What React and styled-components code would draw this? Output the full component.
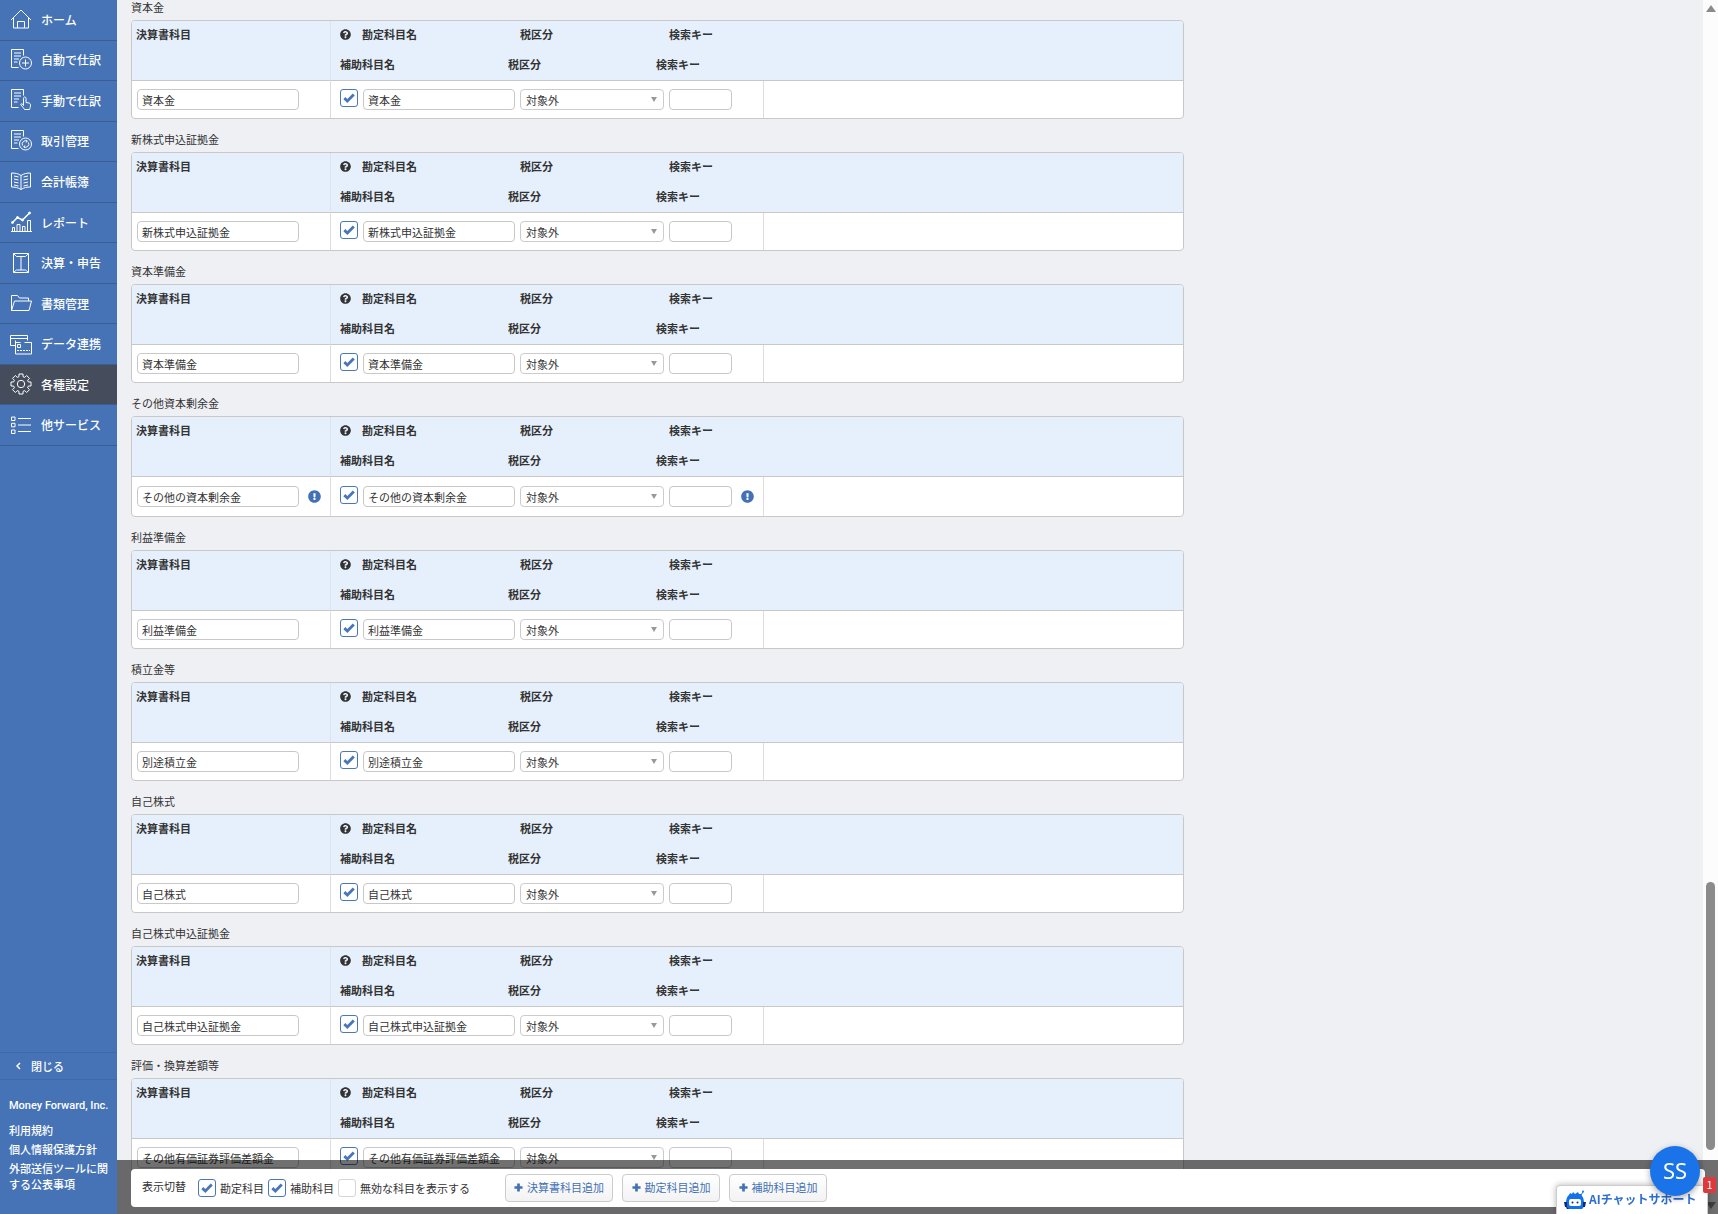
import React from "react";
import styled, { createGlobalStyle } from "styled-components";
import { FaQuestionCircle, FaExclamationCircle } from "react-icons/fa";

const gearPath = () => {
  const teeth = 8;
  const step = (Math.PI * 2) / teeth;
  const point = (r, a) =>
    `${(11 + r * Math.cos(a)).toFixed(2)} ${(11 + r * Math.sin(a)).toFixed(2)}`;
  const points = [];
  for (let i = 0; i < teeth; i++) {
    const a = i * step;
    points.push(point(7.6, a - 0.27), point(10.2, a - 0.2), point(10.2, a + 0.2), point(7.6, a + 0.27));
  }
  return `M${points.join("L")}Z`;
};

const sheet = (
  <>
    <path d="M8.5 18.5H1.5V.5h12v6" />
    <path d="M4 4h7M4 7h7M4 10h5M4 13h3.5" />
  </>
);

const icons = {
  home: <path d="M1 12 11 2l10 10M3.5 10v10h15V10M7.5 20v-6.5h7V20" />,
  auto: (
    <>
      {sheet}
      <circle cx="15.5" cy="14" r="6" />
      <path d="M15.5 10.5v7M12 14h7" />
    </>
  ),
  manual: (
    <>
      {sheet}
      <path d="M13.5 16.5V9.5c0-2 2.5-2 2.5 0v4l3 .5c1 .3 1.5 1 1.5 2 0 2-.5 3-1 4.5h-5c-1-2-2.5-3-3.5-4.5-.5-1.500 1-2 2.500.5" />
    </>
  ),
  trade: (
    <>
      {sheet}
      <circle cx="15.5" cy="14" r="6" />
      <path d="M12.5 15.5a3.3 3.3 0 0 1 4.8-4.2M18.5 12.5a3.3 3.3 0 0 1-4.8 4.2M15.8 10l1.5 1.3-1.5 1.2M15.2 18l-1.5-1.3 1.5-1.2" />
    </>
  ),
  book: (
    <>
      <path d="M11 5.5C8 3.5 5 3 1.5 3v14c3.5 0 6.5.5 9.5 2.5 3-2 6-2.5 9.5-2.5V3C17 3 14 3.5 11 5.5v14" />
      <path d="m4 6 4.5 1M4 9l4.5 1M4 12l4.5 1M4 15l4.5 1M18 6l-4.5 1M18 9l-4.5 1M18 12l-4.5 1M18 15l-4.5 1" />
    </>
  ),
  report: (
    <>
      <path d="M1 20.5h21M2.5 20v-3.5h2V20M7 20v-6.5h3V20M12.5 20v-4.5h2.5V20M17.5 20V9.5h3V20" />
      <path strokeWidth="1.5" d="m2.5 11.5 5-5 5 2.5 7-7" />
      <g fill="#fff">
        <circle cx="2.5" cy="11.5" r="1" />
        <circle cx="7.5" cy="6.5" r="1" />
        <circle cx="12.5" cy="9" r="1" />
        <circle cx="19.5" cy="2" r="1" />
      </g>
    </>
  ),
  closing: (
    <path d="M3.5 1.5h15v19h-15zM3.5 1.5 6.5 4.5h9l3-3M3.5 20.5l3-2.5h9l3 2.5M11 4.5V18" />
  ),
  folder: <path d="M1.5 18.5v-15h6l2 2.5h9v3M1.5 18.5 4.5 9h17l-2.5 9.5z" />,
  data: (
    <>
      <path d="M5 12.5H.5v-10h17v5M.5 5.5h17" />
      <path d="M5.5 7.5V21h16V9.5h-7M5.5 9.5h5M7.5 11.5h3v3h-3z" />
      <path strokeDasharray="2 1" d="M7 17.5h13" />
    </>
  ),
  settings: (
    <>
      <path d={gearPath()} />
      <circle cx="11" cy="11" r="3.7" />
    </>
  ),
  services: (
    <path d="M1.5 3H5v3.5H1.5zM1.5 9.3H5v3.5H1.5zM1.5 16H5v3.5H1.5zM8 4.5h13M8 11h13M8 17.5h13" />
  ),
};

const menu = [
  { icon: "home", label: "ホーム" },
  { icon: "auto", label: "自動で仕訳" },
  { icon: "manual", label: "手動で仕訳" },
  { icon: "trade", label: "取引管理" },
  { icon: "book", label: "会計帳簿" },
  { icon: "report", label: "レポート" },
  { icon: "closing", label: "決算・申告" },
  { icon: "folder", label: "書類管理" },
  { icon: "data", label: "データ連携" },
  { icon: "settings", label: "各種設定", active: true },
  { icon: "services", label: "他サービス" },
];

const groups = [
  { title: "資本金", rows: [{ name: "資本金" }] },
  { title: "新株式申込証拠金", rows: [{ name: "新株式申込証拠金" }] },
  { title: "資本準備金", rows: [{ name: "資本準備金" }] },
  { title: "その他資本剰余金", rows: [{ name: "その他の資本剰余金", notice: true }] },
  { title: "利益準備金", rows: [{ name: "利益準備金" }] },
  { title: "積立金等", rows: [{ name: "別途積立金" }] },
  { title: "自己株式", rows: [{ name: "自己株式" }] },
  { title: "自己株式申込証拠金", rows: [{ name: "自己株式申込証拠金" }] },
  { title: "評価・換算差額等", rows: [{ name: "その他有価証券評価差額金" }] },
];

const Check = ({ id, label, defaultChecked }) => (
  <CheckWrapper>
    <CheckInput id={id} type="checkbox" aria-label={label} defaultChecked={defaultChecked} />
    <svg viewBox="0 0 11 11" aria-hidden="true">
      <path d="M1.2 5.6 4 8.3 9.9 2.3" />
    </svg>
  </CheckWrapper>
);

const Plus = () => (
  <PlusIcon viewBox="0 0 10 10" aria-hidden="true">
    <path d="M5 .5v9M.5 5h9" />
  </PlusIcon>
);

const AccountGroup = ({ title, rows }) => (
  <Group>
    <GroupTitle>{title}</GroupTitle>
    <Table>
      <colgroup>
        <Col $width="199px" />
        <Col $width="433px" />
        <Col />
      </colgroup>
      <thead>
        <tr>
          <Th $line>決算書科目</Th>
          <Th colSpan={2}>
            <HeadLine $columns="22px 158px 149px auto">
              <FaQuestionCircle />
              <span>勘定科目名</span>
              <span>税区分</span>
              <span>検索キー</span>
            </HeadLine>
            <HeadLine $columns="168px 148px auto">
              <span>補助科目名</span>
              <span>税区分</span>
              <span>検索キー</span>
            </HeadLine>
          </Th>
        </tr>
      </thead>
      <tbody>
        {rows.map(({ name, notice }) => (
          <tr key={name}>
            <Td $line $tall={notice}>
              <Fields>
                <TextInput $width="162px" aria-label="決算書科目" defaultValue={name} />
                {notice && <Notice />}
              </Fields>
            </Td>
            <Td $line $tall={notice}>
              <Fields $indent>
                <Check label={`${name}を使用する`} defaultChecked />
                <TextInput $width="152px" aria-label="勘定科目名" defaultValue={name} />
                <SelectWrapper>
                  <Select aria-label="税区分" defaultValue="対象外">
                    <option>対象外</option>
                  </Select>
                </SelectWrapper>
                <TextInput $width="63px" aria-label="検索キー" />
                {notice && <Notice />}
              </Fields>
            </Td>
            <Td $tall={notice} />
          </tr>
        ))}
      </tbody>
    </Table>
  </Group>
);

const App = () => (
  <>
    <GlobalStyle />
    <Shell>
      <Sidebar>
        <Menu>
          {menu.map(({ icon, label, active }) => (
            <MenuItem key={label} $active={active}>
              <MenuLink href="#">
                <MenuIcon viewBox="0 0 22 22" aria-hidden="true">
                  {icons[icon]}
                </MenuIcon>
                {label}
              </MenuLink>
            </MenuItem>
          ))}
        </Menu>
        <CloseButton type="button">
          <Chevron viewBox="0 0 5 8" aria-hidden="true">
            <path d="M4 1 1 4l3 3" />
          </Chevron>
          閉じる
        </CloseButton>
        <SideFooter>
          <Company href="#">Money Forward, Inc.</Company>
          <FooterLink href="#">利用規約</FooterLink>
          <FooterLink href="#">個人情報保護方針</FooterLink>
          <FooterLink href="#">外部送信ツールに関する公表事項</FooterLink>
        </SideFooter>
      </Sidebar>
      <Main>
        <GroupList>
          {groups.map((group) => (
            <AccountGroup key={group.title} {...group} />
          ))}
        </GroupList>
      </Main>
      <ScrollTrack aria-hidden="true">
        <Arrow />
        <Space $grow={869} />
        <Thumb />
        <Space $grow={52} />
        <Arrow $down />
      </ScrollTrack>
    </Shell>
    <ActionBar>
      <ActionPanel>
        <Caption>表示切替</Caption>
        <Check id="show-account" defaultChecked />
        <CheckLabel htmlFor="show-account">勘定科目</CheckLabel>
        <Check id="show-sub" defaultChecked />
        <CheckLabel htmlFor="show-sub">補助科目</CheckLabel>
        <Check id="show-disabled" />
        <CheckLabel htmlFor="show-disabled">無効な科目を表示する</CheckLabel>
        <Buttons>
          <AddButton type="button" $width="108px">
            <Plus />
            決算書科目追加
          </AddButton>
          <AddButton type="button" $width="98px">
            <Plus />
            勘定科目追加
          </AddButton>
          <AddButton type="button" $width="98px">
            <Plus />
            補助科目追加
          </AddButton>
        </Buttons>
      </ActionPanel>
    </ActionBar>
    <ChatButton type="button">
      <Robot viewBox="0 0 22 20" aria-hidden="true">
        <path
          fill="#1372e8"
          d="M3 19q-1-1-1-5 0-7 3-9l1-2 2 1 1-2 2 2 3-2 1 2 2 0 1 2q2 2 2 8 0 4-2 5z"
        />
        <path stroke="#1372e8" strokeWidth="1" d="m17 5 2-3" />
        <circle cx="19" cy="1.5" r="1" fill="#1372e8" />
        <path fill="#0b2a7a" d="M0 12h3v5H1zM19 12h3l-1 5h-2zM2 16l3 3H3z" />
        <rect x="5" y="9" width="12" height="7" rx="2" fill="#fff" />
        <circle cx="8.5" cy="12.5" r="1" fill="#0b2a7a" />
        <circle cx="13.5" cy="12.5" r="1" fill="#0b2a7a" />
      </Robot>
      AIチャットサポート
    </ChatButton>
    <Avatar type="button">SS</Avatar>
    <Badge>1</Badge>
  </>
);

export default App;

const GlobalStyle = createGlobalStyle`
  * {
    box-sizing: border-box;
  }
  body {
    margin: 0;
    background: #eff0f4;
    color: #333;
    font-family: "Noto Sans CJK JP", sans-serif;
    font-size: 11px;
  }
  button,
  input,
  select {
    margin: 0;
    color: inherit;
    font: inherit;
  }
  a {
    color: inherit;
    text-decoration: none;
  }
`;

const Shell = styled.div`
  display: grid;
  grid-template-columns: 117px minmax(0, 1fr) 15px;
  height: 100vh;
  overflow: hidden;
`;

const Sidebar = styled.nav`
  display: flex;
  flex-direction: column;
  background: #4673b5;
  color: #fff;
`;

const Menu = styled.ul`
  display: flex;
  flex-direction: column;
  height: 446px;
  margin: 0 0 auto;
  padding: 0;
  list-style: none;
`;

const MenuItem = styled.li`
  flex: 1;
  border-bottom: 1px solid #3a5e94;
  background: ${({ $active }) => ($active ? "#454c5b" : "transparent")};
`;

const MenuLink = styled.a`
  display: flex;
  align-items: center;
  gap: 9px;
  height: 100%;
  padding: 0 0 1px 10px;
  font-size: 12px;
  font-weight: 500;
  white-space: nowrap;
`;

const MenuIcon = styled.svg`
  width: 22px;
  height: 22px;
  fill: none;
  stroke: #fff;
  stroke-width: 1;
  overflow: visible;
`;

const CloseButton = styled.button`
  display: flex;
  align-items: center;
  gap: 10px;
  height: 28px;
  padding: 0 0 0 16px;
  border: solid #3f68a5;
  border-width: 1px 0;
  background: none;
  font-weight: 500;
`;

const Chevron = styled.svg`
  width: 5px;
  height: 8px;
  fill: none;
  stroke: #fff;
  stroke-width: 1.5;
`;

const SideFooter = styled.div`
  display: flex;
  flex-direction: column;
  gap: 3px;
  padding: 18px 9px 22px;
  line-height: 16px;
  font-weight: 500;
`;

const Company = styled.a`
  margin-bottom: 5px;
  font-family: Roboto, sans-serif;
  white-space: nowrap;
`;

const FooterLink = styled.a`
  word-break: break-all;
`;

const Main = styled.main`
  overflow: hidden;
  padding: 0 14px;
`;

const GroupList = styled.div`
  display: flex;
  flex-direction: column;
  gap: 11px;
  max-width: 1053px;
  margin-top: -2px;
`;

const Group = styled.section`
  display: flex;
  flex-direction: column;
  gap: 4px;
`;

const GroupTitle = styled.h2`
  margin: 0;
  font-size: 11px;
  font-weight: normal;
  line-height: 18px;
`;

const Table = styled.table`
  width: 100%;
  table-layout: fixed;
  border: 1px solid #c8c8c8;
  border-radius: 4px;
  border-spacing: 0;
  background: #fff;
  overflow: hidden;
`;

const Col = styled.col`
  width: ${({ $width }) => $width || "auto"};
`;

const Th = styled.th`
  height: 60px;
  padding: 0 0 0 ${({ $line }) => ($line ? "4px" : "9px")};
  border-bottom: 1px solid #c8c8c8;
  border-right: ${({ $line }) => ($line ? "1px solid #dfe3e8" : "0")};
  background: #e6f0fd;
  line-height: 27px;
  text-align: left;
  vertical-align: top;
`;

const HeadLine = styled.div`
  display: grid;
  grid-template-columns: ${({ $columns }) => $columns};
  align-items: center;
  & + & {
    margin-top: 3px;
  }
  svg {
    width: 11px;
    height: 11px;
  }
`;

const Td = styled.td`
  height: ${({ $tall }) => ($tall ? "39px" : "37px")};
  padding: 0 0 0 5px;
  border-right: ${({ $line }) => ($line ? "1px solid #ddd" : "0")};
`;

const Fields = styled.div`
  display: flex;
  gap: 5px;
  padding-left: ${({ $indent }) => ($indent ? "4px" : "0")};
`;

const TextInput = styled.input`
  width: ${({ $width }) => $width};
  height: 21px;
  padding: 0 4px;
  border: 1px solid #c8c8c8;
  border-radius: 4px;
  background: #fff;
`;

const Notice = styled(FaExclamationCircle)`
  width: 13px;
  height: 13px;
  margin: 4px 0 0 4px;
  color: #4371b5;
`;

const SelectWrapper = styled.div`
  position: relative;
  width: 144px;
  height: 21px;
  &::after {
    content: "";
    position: absolute;
    top: 8px;
    right: 7px;
    border: solid transparent;
    border-width: 5px 3px 0;
    border-top-color: #999;
    pointer-events: none;
  }
`;

const Select = styled.select`
  width: 100%;
  height: 100%;
  padding: 0 16px 0 5px;
  border: 1px solid #ccc;
  border-radius: 4px;
  background: #fff;
  line-height: 18px;
  appearance: none;
`;

const CheckWrapper = styled.span`
  display: grid;
  width: 18px;
  height: 18px;
  > * {
    grid-area: 1 / 1;
  }
  svg {
    place-self: center;
    width: 12px;
    height: 12px;
    fill: none;
    stroke: #4a77b8;
    stroke-width: 2.6;
    pointer-events: none;
  }
  input:not(:checked) + svg {
    visibility: hidden;
  }
`;

const CheckInput = styled.input`
  width: 18px;
  height: 18px;
  border: 1px solid #d5d5d5;
  border-radius: 3px;
  background: #fff;
  appearance: none;
  &:checked {
    border-color: #4a77b8;
  }
`;

const ScrollTrack = styled.div`
  display: flex;
  flex-direction: column;
  align-items: center;
  padding: 5px 0;
  background: #fcfcfc;
`;

const Arrow = styled.span`
  border: solid transparent;
  border-width: ${({ $down }) => ($down ? "7px 5px 0" : "0 5px 7px")};
  border-top-color: ${({ $down }) => ($down ? "#8b8b8b" : "transparent")};
  border-bottom-color: ${({ $down }) => ($down ? "transparent" : "#8b8b8b")};
`;

const Space = styled.span`
  flex: ${({ $grow }) => $grow};
`;

const Thumb = styled.span`
  flex: 267;
  width: 9px;
  border-radius: 5px;
  background: #8b8b8b;
`;

const ActionBar = styled.div`
  position: fixed;
  right: 0;
  bottom: 0;
  left: 117px;
  padding: 9px 13px 7px 14px;
  background: rgba(0, 0, 0, 0.56);
`;

const ActionPanel = styled.div`
  display: flex;
  align-items: center;
  gap: 4px;
  height: 38px;
  padding-left: 11px;
  border-radius: 4px;
  background: #fff;
`;

const Caption = styled.span`
  margin-right: 8px;
  padding-bottom: 4px;
`;

const CheckLabel = styled.label`
  padding-bottom: 1px;
`;

const Buttons = styled.div`
  display: flex;
  gap: 9px;
  margin-left: 31px;
`;

const AddButton = styled.button`
  display: flex;
  align-items: center;
  justify-content: center;
  gap: 4px;
  width: ${({ $width }) => $width};
  height: 28px;
  padding: 0 0 2px;
  border: 1px solid #ccc;
  border-radius: 4px;
  background: linear-gradient(#fff, #f2f2f2);
  color: #4371b5;
  white-space: nowrap;
`;

const PlusIcon = styled.svg`
  flex: none;
  width: 9px;
  height: 9px;
  stroke: #4371b5;
  stroke-width: 3;
`;

const ChatButton = styled.button`
  position: fixed;
  right: 10px;
  bottom: 0;
  display: flex;
  align-items: center;
  gap: 3px;
  width: 152px;
  height: 29px;
  padding: 0 0 4px 7px;
  border: 1px solid #ccc;
  border-bottom: 0;
  border-radius: 4px 4px 0 0;
  background: #fff;
  box-shadow: 0 0 6px rgba(0, 0, 0, 0.3);
  color: #2d6fd2;
  font-size: 12px;
  font-weight: bold;
  white-space: nowrap;
`;

const Robot = styled.svg`
  flex: none;
  width: 22px;
  height: 20px;
  margin-top: 4px;
`;

const Avatar = styled.button`
  position: fixed;
  right: 18px;
  bottom: 18px;
  width: 50px;
  height: 50px;
  padding: 0 0 2px;
  border: 0;
  border-radius: 50%;
  background: #1a73e8;
  box-shadow: 0 2px 6px rgba(0, 0, 0, 0.35);
  color: #fff;
  font-family: "Noto Sans", sans-serif;
  font-size: 22px;
`;

const Badge = styled.span`
  position: fixed;
  right: 2px;
  bottom: 21px;
  width: 13px;
  height: 16px;
  border-radius: 2px;
  background: #dc3a3c;
  color: #fff;
  line-height: 15px;
  text-align: center;
`;
